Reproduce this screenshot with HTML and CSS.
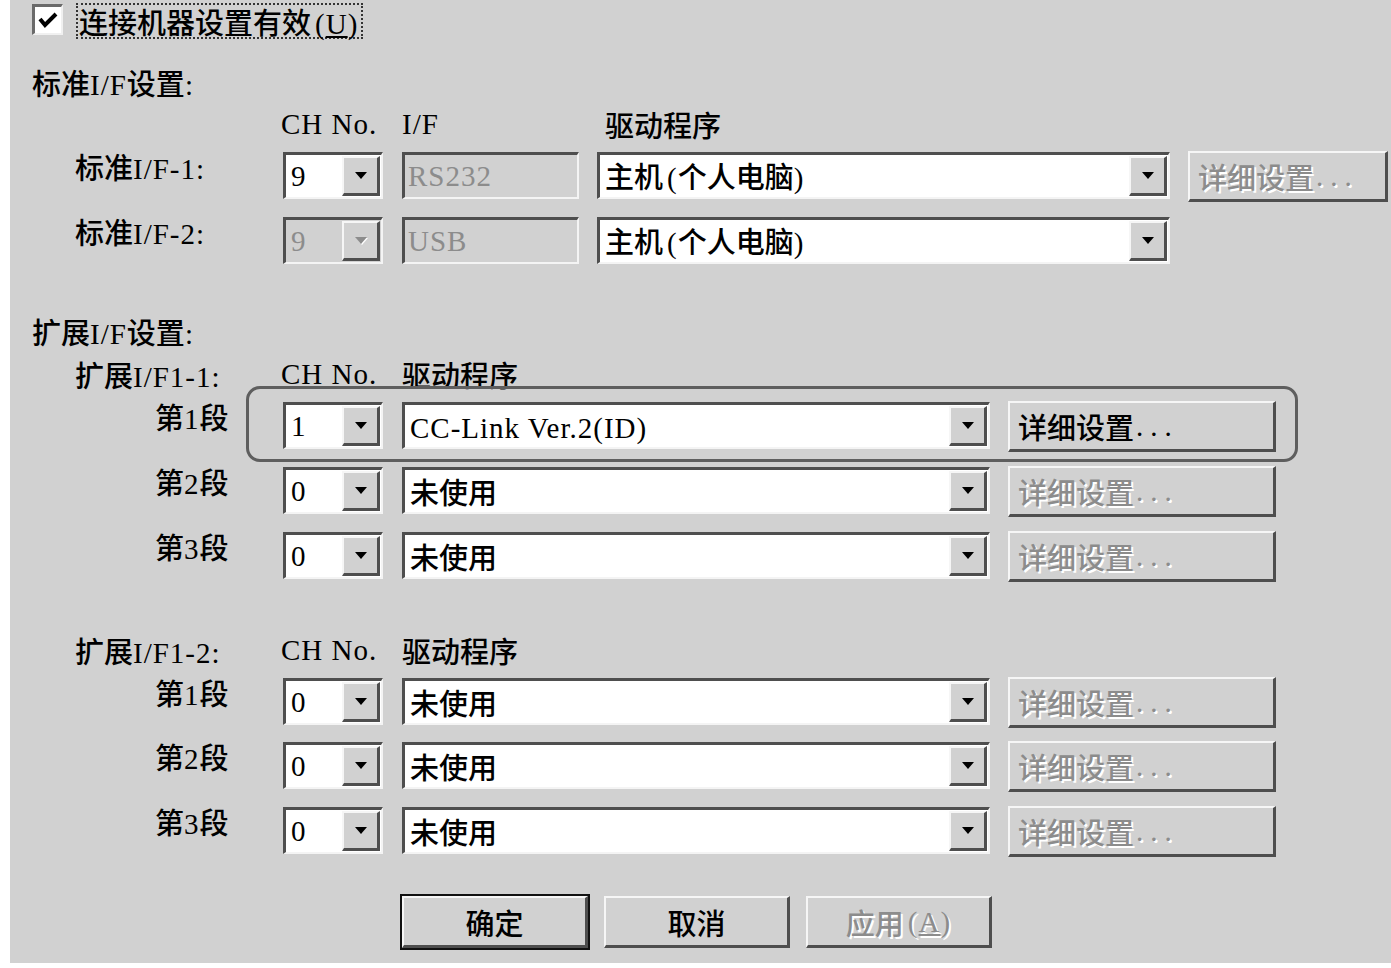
FILE: index.html
```html
<!DOCTYPE html>
<html lang="zh-CN">
<head>
<meta charset="utf-8">
<title>连接机器设置</title>
<link rel="stylesheet" href="styles.css">
</head>
<body>
<div class="dialog">
  <div class="enable-row">
    <span class="checkbox"><svg width="20" height="16" viewBox="0 0 20 16"><polyline points="2,7 7,13 18,2" fill="none" stroke="#000" stroke-width="4"/></svg></span>
    <span class="focus-label">连接机器设置有效<span class="m paren">(<u>U</u>)</span></span>
  </div>

  <div class="section-title">标准<span class="m">I/F</span>设置<span class="m">:</span></div>
  <div class="head-row head-std">
    <span class="h-ch m">CH No.</span><span class="h-if m">I/F</span><span class="h-drv">驱动程序</span>
  </div>
  <div class="row row-first">
    <div class="lbl lbl-main">标准<span class="m">I/F-1:</span></div>
    <div class="combo ch"><span class="val m">9</span><span class="drop"><i class="tri"></i></span></div>
    <div class="field if-field"><span class="m">RS232</span></div>
    <div class="combo drv-std"><span class="val">主机<span class="m paren">(</span>个人电脑<span class="m">)</span></span><span class="drop"><i class="tri"></i></span></div>
    <div class="btn btn-std disabled">详细设置<span class="m dots">...</span></div>
  </div>
  <div class="row">
    <div class="lbl lbl-main">标准<span class="m">I/F-2:</span></div>
    <div class="combo ch off"><span class="val m">9</span><span class="drop"><i class="tri"></i></span></div>
    <div class="field if-field"><span class="m">USB</span></div>
    <div class="combo drv-std"><span class="val">主机<span class="m paren">(</span>个人电脑<span class="m">)</span></span><span class="drop"><i class="tri"></i></span></div>
  </div>

  <div class="section-title section-ext">扩展<span class="m">I/F</span>设置<span class="m">:</span></div>
  <div class="head-row head-ext">
    <span class="h-lbl">扩展<span class="m">I/F1-1:</span></span><span class="h-ch m">CH No.</span><span class="h-drv2">驱动程序</span>
  </div>
  <div class="row row-first row-hl">
    <div class="hl-box"></div>
    <div class="lbl lbl-step">第<span class="m">1</span>段</div>
    <div class="combo ch"><span class="val m">1</span><span class="drop"><i class="tri"></i></span></div>
    <div class="combo drv-ext"><span class="val"><span class="m">CC-Link Ver.2(ID)</span></span><span class="drop"><i class="tri"></i></span></div>
    <div class="btn btn-ext">详细设置<span class="m dots">...</span></div>
  </div>
  <div class="row">
    <div class="lbl lbl-step">第<span class="m">2</span>段</div>
    <div class="combo ch"><span class="val m">0</span><span class="drop"><i class="tri"></i></span></div>
    <div class="combo drv-ext"><span class="val">未使用</span><span class="drop"><i class="tri"></i></span></div>
    <div class="btn btn-ext disabled">详细设置<span class="m dots">...</span></div>
  </div>
  <div class="row">
    <div class="lbl lbl-step">第<span class="m">3</span>段</div>
    <div class="combo ch"><span class="val m">0</span><span class="drop"><i class="tri"></i></span></div>
    <div class="combo drv-ext"><span class="val">未使用</span><span class="drop"><i class="tri"></i></span></div>
    <div class="btn btn-ext disabled">详细设置<span class="m dots">...</span></div>
  </div>

  <div class="head-row head-ext head-ext2">
    <span class="h-lbl">扩展<span class="m">I/F1-2:</span></span><span class="h-ch m">CH No.</span><span class="h-drv2">驱动程序</span>
  </div>
  <div class="row row-first">
    <div class="lbl lbl-step">第<span class="m">1</span>段</div>
    <div class="combo ch"><span class="val m">0</span><span class="drop"><i class="tri"></i></span></div>
    <div class="combo drv-ext"><span class="val">未使用</span><span class="drop"><i class="tri"></i></span></div>
    <div class="btn btn-ext disabled">详细设置<span class="m dots">...</span></div>
  </div>
  <div class="row row-tight">
    <div class="lbl lbl-step">第<span class="m">2</span>段</div>
    <div class="combo ch"><span class="val m">0</span><span class="drop"><i class="tri"></i></span></div>
    <div class="combo drv-ext"><span class="val">未使用</span><span class="drop"><i class="tri"></i></span></div>
    <div class="btn btn-ext disabled">详细设置<span class="m dots">...</span></div>
  </div>
  <div class="row">
    <div class="lbl lbl-step">第<span class="m">3</span>段</div>
    <div class="combo ch"><span class="val m">0</span><span class="drop"><i class="tri"></i></span></div>
    <div class="combo drv-ext"><span class="val">未使用</span><span class="drop"><i class="tri"></i></span></div>
    <div class="btn btn-ext disabled">详细设置<span class="m dots">...</span></div>
  </div>

  <div class="actions">
    <div class="btn act default">确定</div>
    <div class="btn act">取消</div>
    <div class="btn act disabled">应用<span class="m paren">(<u>A</u>)</span></div>
  </div>
</div>
</body>
</html>
```

FILE: styles.css
```css
* { box-sizing: border-box; }
html, body { margin: 0; padding: 0; background: #ffffff; }
body {
  font-family: "Noto Sans CJK SC", "Noto Sans", sans-serif;
  font-weight: 500;
  font-size: 29px;
  color: #000;
}
.m {
  font-family: "Liberation Serif", "Noto Sans CJK SC", serif;
  font-weight: 400;
  font-size: 29px;
  letter-spacing: 1px;
}
.paren { margin-left: 4px; }
.dots { letter-spacing: 7px; margin-left: 2px; }
.dialog {
  margin-left: 10px;
  width: 1381px;
  height: 963px;
  padding-top: 3px;
  background: #d1d1d1;
  overflow: hidden;
}

/* enable checkbox */
.enable-row {
  height: 36px;
  display: flex;
  align-items: center;
  padding-left: 22px;
}
.checkbox {
  width: 31px;
  height: 31px;
  margin-top: -3px;
  background: #fff;
  border-style: solid;
  border-width: 3px 2px 2px 3px;
  border-color: #6a6a6a #f0f0f0 #f0f0f0 #6a6a6a;
  display: flex;
  align-items: center;
  justify-content: center;
}
.focus-label {
  margin-left: 13px;
  padding: 0 3px 0 1px;
  height: 36px;
  line-height: 32px;
  border: 2px dotted #333;
  white-space: nowrap;
}

/* section titles & headers */
.section-title {
  margin-top: 25px;
  height: 36px;
  line-height: 36px;
  padding-left: 22px;
}
.section-ext { margin-top: 46px; }
.head-row {
  height: 32px;
  line-height: 32px;
  display: flex;
  white-space: nowrap;
}
.head-std { margin-top: 8px; padding-left: 271px; }
.head-std .h-ch { width: 121px; }
.head-std .h-if { width: 203px; }
.head-ext { margin-top: 9px; padding-left: 65px; }
.head-ext2 { margin-top: 52px; }
.h-lbl { width: 206px; }
.head-ext .h-ch { width: 121px; }

/* rows */
.row {
  position: relative;
  height: 51px;
  margin-top: 14px;
  display: flex;
  align-items: flex-start;
}
.row-first { margin-top: 11px; }
.row-tight { margin-top: 13px; }
.lbl {
  width: 273px;
  height: 30px;
  line-height: 30px;
  white-space: nowrap;
}
.lbl-main { padding-left: 65px; }
.lbl-step { padding-left: 145px; }

/* combo & fields */
.combo, .field {
  margin-top: 1px;
  height: 47px;
  border-style: solid;
  border-width: 3px 2px 2px 3px;
  border-color: #4e4e4e #f4f4f4 #f4f4f4 #4e4e4e;
  display: flex;
  align-items: center;
  background: #fff;
}
.combo .val {
  flex: 1;
  padding-left: 5px;
  white-space: nowrap;
  overflow: hidden;
  line-height: 40px;
}
.drop {
  width: 38px;
  height: 40px;
  margin-right: 1px;
  background: #d1d1d1;
  border-style: solid;
  border-width: 2px 3px 3px 2px;
  border-color: #f6f6f6 #4e4e4e #4e4e4e #f6f6f6;
  display: flex;
  align-items: center;
  justify-content: center;
}
.tri {
  width: 0;
  height: 0;
  border-top: 7px solid #000;
  border-left: 6px solid transparent;
  border-right: 6px solid transparent;
}
.ch { width: 100px; }
.ch.off { background: #d1d1d1; }
.ch.off .val { color: #8c8c8c; }
.ch.off .tri { border-top-color: #8c8c8c; filter: drop-shadow(1px 1px 0 #fff); }
.field {
  background: #d1d1d1;
  color: #8c8c8c;
  padding-left: 3px;
  line-height: 40px;
}
.if-field { width: 177px; margin-left: 19px; }
.drv-std { width: 573px; margin-left: 18px; }
.drv-ext { width: 588px; margin-left: 19px; }

/* buttons */
.btn {
  height: 51px;
  background: #d1d1d1;
  border-style: solid;
  border-width: 2px 3px 3px 2px;
  border-color: #f6f6f6 #4e4e4e #4e4e4e #f6f6f6;
  display: flex;
  align-items: center;
  padding-left: 8px;
  white-space: nowrap;
  line-height: 44px;
}
.btn-std { width: 200px; margin-left: 18px; }
.btn-ext { width: 268px; margin-left: 18px; }
.disabled { color: #8c8c8c; text-shadow: 2px 2px 0 #ffffff; }

/* highlight frame around first extension row */
.hl-box {
  position: absolute;
  left: 236px;
  top: -15px;
  width: 1052px;
  height: 76px;
  border: 3px solid #5e5e5e;
  border-radius: 14px;
  pointer-events: none;
}

/* action buttons */
.actions {
  margin-top: 39px;
  padding-left: 392px;
  display: flex;
  gap: 16px;
}
.btn.act {
  width: 186px;
  height: 52px;
  justify-content: center;
  padding-left: 0;
}
.btn.default {
  box-shadow: 0 0 0 2px #111;
}
```
